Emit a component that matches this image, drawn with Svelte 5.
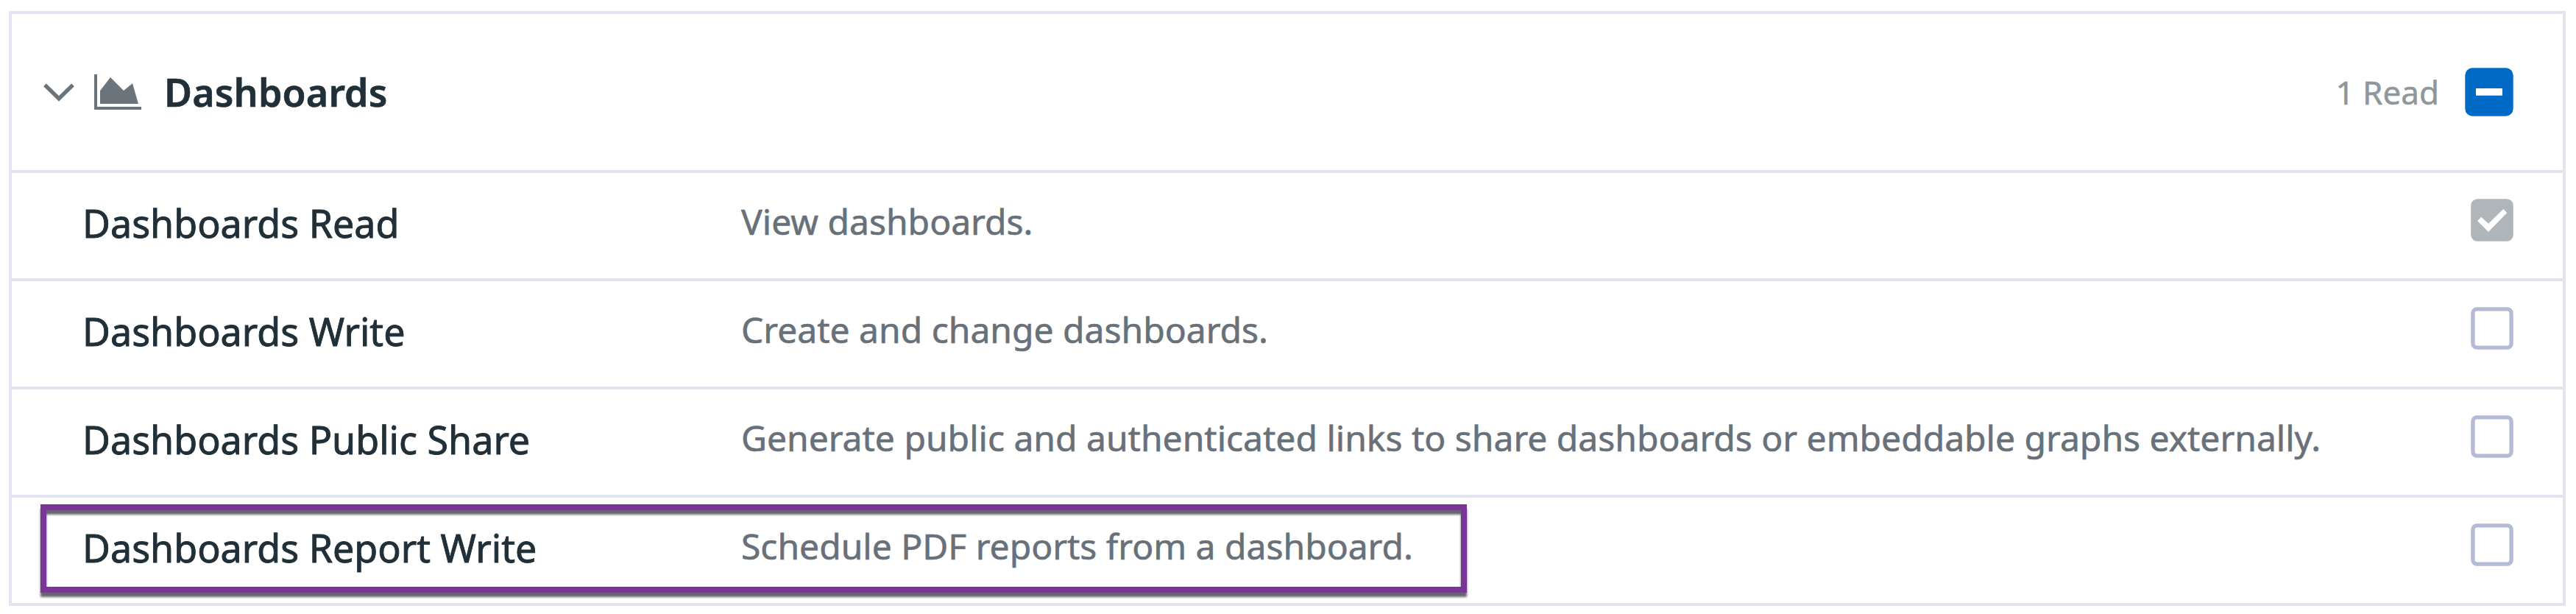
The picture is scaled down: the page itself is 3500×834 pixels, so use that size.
<script>
  const permissions = [
    { name: 'Dashboards Read', text: 'View dashboards.', checked: true },
    { name: 'Dashboards Write', text: 'Create and change dashboards.' },
    { name: 'Dashboards Public Share', text: 'Generate public and authenticated links to share dashboards or embeddable graphs externally.' },
    { name: 'Dashboards Report Write', text: 'Schedule PDF reports from a dashboard.', highlighted: true }
  ];
</script>

<section class="panel">
  <header>
    <svg class="chevron" viewBox="0 0 42 26" width="42" height="26"><path d="M2 3.4 21 21.9 40 3.4" fill="none" stroke="#6b747b" stroke-width="5.4" /></svg>
    <svg class="chart" viewBox="0 0 64 48" width="64" height="48" fill="#6b747b"><path d="M0 0h4v44h60v4H0z" /><path d="M8 22.3 22 4 40 22 52 12.3 60 40H8z" /></svg>
    <h2>Dashboards</h2>
    <span class="count">1 Read</span>
    <svg class="toggle" viewBox="0 0 66 66" width="66" height="66"><rect x=".3" y=".3" width="65.4" height="65.4" rx="10" fill="#006bc6" /><path d="M15 28h36v9.7H15z" fill="#fff" /></svg>
  </header>
  {#each permissions as p}
    <div class="row">
      <span class="name">{p.name}</span>
      <span class="text">{p.text}</span>
      <svg class="box" viewBox="0 0 58 58" width="58" height="58">
        {#if p.checked}
          <rect x=".2" y=".2" width="57.6" height="57.6" rx="9" fill="#afb5b8" />
          <path d="M9 30 14.3 24.7 24 33.7 44.3 14 49.3 19 24 45z" fill="#fff" />
        {:else}
          <rect x="2.9" y="2.9" width="52.2" height="52.2" rx="5.5" fill="#fff" stroke="#b3bbd6" stroke-width="5.4" />
        {/if}
      </svg>
      {#if p.highlighted}<div class="highlight"></div>{/if}
    </div>
  {/each}
</section>

<style>
  :global(body) { background: #fff; }
  .panel {
    box-sizing: border-box;
    width: 3474px;
    margin: 15px 0 0 12px;
    border: 4px solid #e2e5ef;
    font-family: "Noto Sans", sans-serif;
    white-space: nowrap;
  }
  header {
    display: flex;
    align-items: center;
    height: 212px;
    padding: 0 67px 0 43px;
  }
  .chevron { flex: none; margin-right: 27px; }
  .chart { flex: none; margin-right: 31px; }
  h2 {
    margin: 0;
    font-size: 52px;
    line-height: 72px;
    font-weight: 600;
    letter-spacing: .15px;
    color: #212f38;
    -webkit-text-stroke: .6px #212f38;
  }
  .count {
    margin: 0 35px 0 auto;
    font-size: 44px;
    line-height: 64px;
    color: #8f979a;
    -webkit-text-stroke: .5px #8f979a;
  }
  .toggle { flex: none; }
  .row {
    position: relative;
    box-sizing: border-box;
    display: grid;
    grid-template-columns: 895px 1fr 58px;
    align-items: start;
    height: 147px;
    padding: 0 67px 0 96px;
    border-top: 4px solid #e2e5ef;
  }
  .name {
    padding-top: 32px;
    font-size: 52px;
    line-height: 72px;
    color: #212f38;
    -webkit-text-stroke: .9px #212f38;
  }
  .text {
    padding-top: 31px;
    font-size: 48px;
    line-height: 70px;
    color: #68717a;
    -webkit-text-stroke: .6px #68717a;
  }
  .box { margin-top: 35px; }
  .highlight {
    position: absolute;
    box-sizing: border-box;
    left: 39px;
    top: 9px;
    width: 1938px;
    height: 120px;
    border: 8px solid #783699;
    filter: drop-shadow(0 6px 1.5px rgba(0, 0, 0, .6));
  }
</style>
